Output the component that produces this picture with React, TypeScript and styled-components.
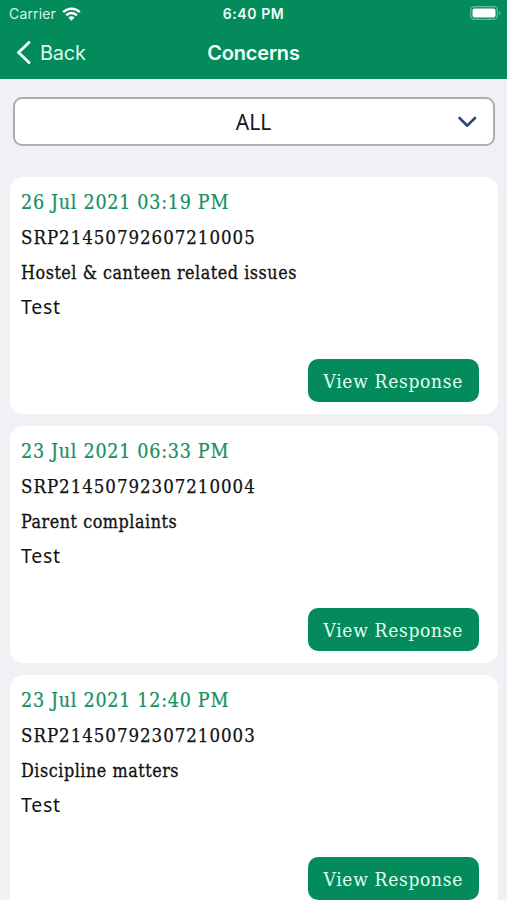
import React from "react";
import styled, { createGlobalStyle } from "styled-components";

const GlobalStyle = createGlobalStyle`
  * { box-sizing: border-box; }
  html, body { margin: 0; background: #f0f0f5; }
  body { height: 900px; overflow: hidden; }
`;

const Screen = styled.main`
  height: 900px;
  overflow: hidden;
  background: #f0f0f5;
  color: #121212;
  font-family: Inter, sans-serif;
`;

const Header = styled.header`
  height: 79px;
  background: #048b5b;
  color: #f0fff8;
`;

const StatusBar = styled.div`
  display: grid;
  grid-template-columns: 1fr auto 1fr;
  align-items: center;
  height: 27px;
  padding: 0 6px 0 9px;
`;

const Carrier = styled.div`
  display: flex;
  align-items: center;
  gap: 6px;
  font-size: 14px;
  line-height: 27px;
  letter-spacing: 0.15px;
  color: #d3f5e7;
`;

const Clock = styled.div`
  margin-right: 3px;
  font-size: 14px;
  font-weight: 600;
  letter-spacing: 0.6px;
`;

const Battery = styled.svg`
  justify-self: end;
  margin-top: -1px;
`;

const NavBar = styled.nav`
  display: grid;
  grid-template-columns: 1fr auto 1fr;
  align-items: center;
  height: 51px;
  padding: 0 15px;
`;

const BackButton = styled.button`
  display: flex;
  align-items: center;
  gap: 8px;
  padding: 0;
  border: 0;
  background: none;
  color: #d9f9ec;
  font: 400 20px/26px Inter, sans-serif;
  letter-spacing: -0.25px;
`;

const Title = styled.h1`
  margin: 0;
  font-size: 20px;
  font-weight: 600;
  line-height: 26px;
  letter-spacing: -0.2px;
`;

const Filter = styled.button`
  display: grid;
  grid-template-columns: 1fr auto 1fr;
  align-items: center;
  width: 482px;
  height: 49px;
  margin: 18px 0 0 13px;
  padding: 0 16px 0 15px;
  border: 2px solid #aeaeb2;
  border-radius: 9px;
  background: #fff;
  color: #161616;
  font: 400 21px/28px "Noto Sans", sans-serif;
`;

const FilterValue = styled.span`
  grid-column: 2;
`;

const FilterArrow = styled.svg`
  justify-self: end;
`;

const List = styled.div`
  display: flex;
  flex-direction: column;
  gap: 12.5px;
  padding: 31px 9.5px 0 10px;
`;

const Card = styled.article`
  display: flex;
  flex-direction: column;
  flex: none;
  height: 236.5px;
  padding: 8px 18.5px 11.6px 11px;
  border-radius: 13px;
  background: #fff;
`;

const Line = styled.div<{ $kind: "date" | "code" | "subject" | "body" }>`
  height: 35.1px;
  line-height: ${({ $kind }) => ($kind === "body" ? 33.5 : 35)}px;
  white-space: nowrap;
  color: ${({ $kind }) => ($kind === "date" ? "#16905f" : "#121212")};
  font-family: ${({ $kind }) =>
    $kind === "body" ? '"Noto Sans", sans-serif' : '"DejaVu Serif Condensed", "DejaVu Serif", serif'};
  font-size: ${({ $kind }) => ({ date: 19.5, code: 18.5, subject: 17.8, body: 19.5 })[$kind]}px;
  letter-spacing: ${({ $kind }) => ({ date: 0.73, code: 0.98, subject: 0.54, body: 0.7 })[$kind]}px;
  -webkit-text-stroke: ${({ $kind }) => ({ date: 0.2, code: 0.25, subject: 0.3, body: 0 })[$kind]}px currentColor;
`;

const ResponseButton = styled.button`
  align-self: flex-end;
  width: 171.5px;
  height: 43px;
  margin-top: auto;
  padding: 2px 0 0;
  border: 0;
  border-radius: 10px;
  background: #048b5b;
  color: #e2fff3;
  font: 400 19px/28px "DejaVu Serif Condensed", "DejaVu Serif", serif;
  letter-spacing: 0.7px;
  white-space: nowrap;
`;

const concerns = [
  { date: "26 Jul 2021 03:19 PM", code: "SRP21450792607210005", subject: "Hostel & canteen related issues", body: "Test" },
  { date: "23 Jul 2021 06:33 PM", code: "SRP21450792307210004", subject: "Parent complaints", body: "Test" },
  { date: "23 Jul 2021 12:40 PM", code: "SRP21450792307210003", subject: "Discipline matters", body: "Test" },
];

export default function App() {
  return (
    <Screen>
      <GlobalStyle />
      <Header>
        <StatusBar>
          <Carrier>
            Carrier
            <svg width="19" height="14" viewBox="0 0 19 14" fill="none" stroke="#fff" strokeWidth="2.5">
              <path d="M1.2 5.2C5.8.5 13.2.5 17.8 5.2" />
              <path d="M4.2 8.3c2.9-3 7.7-3 10.6 0" />
              <path d="M9.5 13.7 6.4 10.5c1.8-1.7 4.4-1.7 6.2 0Z" fill="#fff" stroke="none" />
            </svg>
          </Carrier>
          <Clock>6:40 PM</Clock>
          <Battery width="31" height="14" viewBox="0 0 31 14">
            <rect x=".7" y=".7" width="26.6" height="12.6" rx="3.6" fill="none" stroke="#69b99b" strokeWidth="1.2" />
            <rect x="2.5" y="2.5" width="23" height="9" rx="2" fill="#fff" />
            <path d="M29 4.7c2 .8 2 3.8 0 4.6Z" fill="#69b99b" />
          </Battery>
        </StatusBar>
        <NavBar>
          <BackButton>
            <svg width="17" height="24" viewBox="0 0 17 24" fill="none" stroke="#edfff7" strokeWidth="3" strokeLinecap="round" strokeLinejoin="round">
              <path d="M14 1.5 3.5 11.5 14 21.5" />
            </svg>
            Back
          </BackButton>
          <Title>Concerns</Title>
        </NavBar>
      </Header>
      <Filter>
        <FilterValue>ALL</FilterValue>
        <FilterArrow width="20" height="12" viewBox="0 0 20 12" fill="none" stroke="#2b4774" strokeWidth="2.6" strokeLinecap="round" strokeLinejoin="round">
          <path d="m2.5 2 7.8 7.7L18 2" />
        </FilterArrow>
      </Filter>
      <List>
        {concerns.map((c) => (
          <Card key={c.code}>
            <Line $kind="date">{c.date}</Line>
            <Line $kind="code">{c.code}</Line>
            <Line $kind="subject">{c.subject}</Line>
            <Line $kind="body">{c.body}</Line>
            <ResponseButton>View Response</ResponseButton>
          </Card>
        ))}
      </List>
    </Screen>
  );
}
